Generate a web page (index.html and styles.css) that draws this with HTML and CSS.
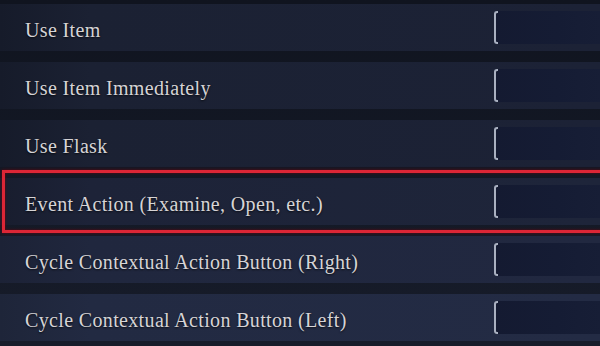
FILE: index.html
```html
<!DOCTYPE html>
<html>
<head>
<meta charset="utf-8">
<link rel="stylesheet" href="styles.css">
</head>
<body>
<div class="list">
  <div class="row"><span class="label">Use Item</span><div class="slot"></div></div>
  <div class="row"><span class="label">Use Item Immediately</span><div class="slot"></div></div>
  <div class="row"><span class="label">Use Flask</span><div class="slot"></div></div>
  <div class="row selected"><span class="label">Event Action (Examine, Open, etc.)</span><div class="slot"></div></div>
  <div class="row"><span class="label">Cycle Contextual Action Button (Right)</span><div class="slot"></div></div>
  <div class="row"><span class="label">Cycle Contextual Action Button (Left)</span><div class="slot"></div></div>
</div>
</body>
</html>
```
FILE: styles.css
```css
html, body {
  margin: 0;
  padding: 0;
}
body {
  width: 600px;
  height: 346px;
  overflow: hidden;
  background: linear-gradient(to bottom, #10141f 0%, #141926 60%, #171c2a 100%);
  font-family: "Liberation Serif", "DejaVu Serif", serif;
}
.list {
  display: flex;
  flex-direction: column;
  gap: 11px;
  padding-top: 4px;
}
.row {
  position: relative;
  height: 47px;
  display: flex;
  align-items: center;
  justify-content: space-between;
  background: linear-gradient(to right, #161b2a 0px, #1b2133 90px, #1c2236 100%);
}
.row:nth-child(4) {
  background: linear-gradient(to right, #181d2e 0px, #1d2338 90px, #1e253a 100%);
}
.row:nth-child(5) {
  background: linear-gradient(to right, #1c2236 0px, #20273e 90px, #212840 100%);
}
.row:nth-child(6) {
  background: linear-gradient(to right, #1e2539 0px, #222a42 90px, #232b44 100%);
}
.label {
  padding-left: 25px;
  padding-top: 5px;
  font-size: 20px;
  letter-spacing: 0.35px;
  color: #d6d4d6;
  text-shadow: 0 1px 2px rgba(0, 0, 0, 0.7);
  white-space: nowrap;
}
.slot {
  position: relative;
  width: 106px;
  height: 33px;
  background: linear-gradient(to right, #141a31, #151c34 60%, #171e36);
}
.slot::before {
  content: "";
  position: absolute;
  left: 0;
  top: 0;
  bottom: 0;
  width: 4px;
  border: 2px solid #a9b0c0;
  border-right: none;
  border-radius: 3px 0 0 3px;
  box-sizing: border-box;
}
.selected::after {
  content: "";
  position: absolute;
  top: -8px;
  bottom: -8px;
  left: 2px;
  right: -10px;
  border: 3px solid #dc2636;
  box-shadow: 0 0 3px rgba(120, 0, 10, 0.8), inset 0 0 3px rgba(120, 0, 10, 0.8);
}
```
